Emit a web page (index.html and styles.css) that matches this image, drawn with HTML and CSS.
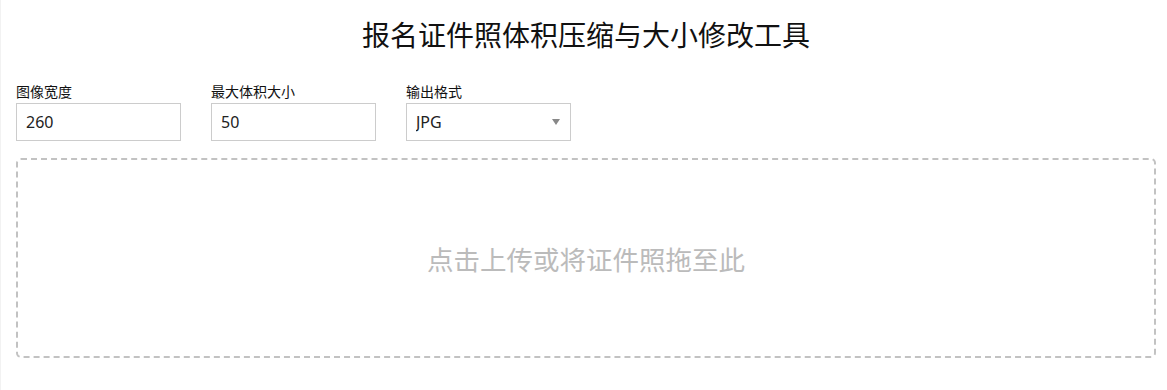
FILE: index.html
```html
<!DOCTYPE html>
<html>
<head>
    <meta charset="utf-8">
    <title>报名证件照体积压缩与大小修改工具</title>
    <link rel="stylesheet" href="styles.css">
</head>
<body>
    <div class="container">
        <h1>报名证件照体积压缩与大小修改工具</h1>

        <div class="options">
            <div class="field">
                <label for="width">图像宽度</label>
                <input type="text" id="width" value="260">
            </div>
            <div class="field">
                <label for="maxSize">最大体积大小</label>
                <input type="text" id="maxSize" value="50">
            </div>
            <div class="field">
                <label for="format">输出格式</label>
                <div class="select-wrap">
                    <select id="format">
                        <option>JPG</option>
                        <option>PNG</option>
                    </select>
                </div>
            </div>
        </div>

        <div class="dropzone" id="dropzone">
            点击上传或将证件照拖至此
        </div>
    </div>
</body>
</html>
```

FILE: styles.css
```css
html, body {
    margin: 0;
    padding: 0;
    background-color: white;
}

body {
    font-family: "Noto Sans CJK SC", "Noto Sans", sans-serif;
    color: #111;
    border-left: 1px solid #f2f2f2;
    min-height: 390px;
    box-sizing: border-box;
}

.container {
    padding: 0 11px 0 15px;
}

h1 {
    margin: 10px 0 0 0;
    font-size: 28px;
    font-weight: normal;
    line-height: 48px;
    text-align: center;
    color: #111;
}

.options {
    display: flex;
    gap: 30px;
    margin-top: 23px;
}

.field {
    display: flex;
    flex-direction: column;
    width: 165px;
}

.field label {
    font-size: 14px;
    line-height: 20px;
    margin-bottom: 2px;
    color: #111;
}

.field input,
.field select {
    box-sizing: border-box;
    width: 165px;
    height: 38px;
    margin: 0;
    padding: 0 9px;
    border: 1px solid #ccc;
    border-radius: 0;
    background-color: white;
    font-family: "Noto Sans", "Noto Sans CJK SC", sans-serif;
    font-size: 16px;
    color: #222;
    outline: none;
}

.select-wrap {
    position: relative;
}

.field select {
    appearance: none;
    -webkit-appearance: none;
}

.select-wrap::after {
    content: "";
    position: absolute;
    right: 11px;
    top: 16px;
    border-left: 4px solid transparent;
    border-right: 4px solid transparent;
    border-top: 6px solid #888;
    pointer-events: none;
}

.dropzone {
    box-sizing: border-box;
    height: 200px;
    margin-top: 17px;
    border: 2px dashed #c2c2c2;
    border-radius: 5px;
    display: flex;
    align-items: center;
    justify-content: center;
    font-size: 26.5px;
    color: #bbb;
    cursor: pointer;
}
```
